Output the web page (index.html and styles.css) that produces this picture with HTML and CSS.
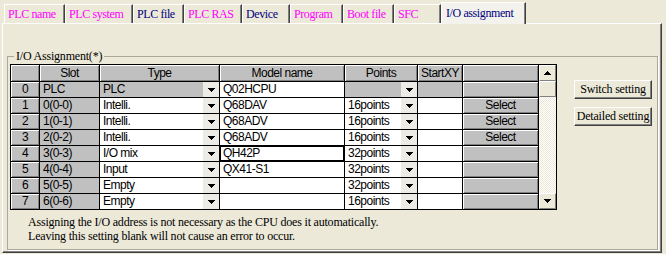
FILE: index.html
```html
<!DOCTYPE html>
<html lang="en">
<head>
    <meta charset="UTF-8">
    <title>PLC parameter - I/O assignment</title>
    <link rel="stylesheet" href="styles.css">
</head>
<body>
    <div class="tabs">
        <div class="tab">PLC name</div>
        <div class="tab">PLC system</div>
        <div class="tab navy">PLC file</div>
        <div class="tab">PLC RAS</div>
        <div class="tab navy">Device</div>
        <div class="tab">Program</div>
        <div class="tab">Boot file</div>
        <div class="tab">SFC</div>
        <div class="tab navy active">I/O assignment</div>
    </div>
    <div class="panel">
        <fieldset class="group">
            <legend>I/O Assignment(*)</legend>
            <div class="io">
                <div class="grid">
                    <div class="scroll">
                        <div class="sb-btn"><i class="arrow up"></i></div>
                        <div class="sb-btn"></div>
                        <div class="sb-btn down"><i class="arrow"></i></div>
                    </div>

                    <!-- header -->
                    <div class="hd"></div>
                    <div class="hd">Slot</div>
                    <div class="hd">Type</div>
                    <div class="hd">Model name</div>
                    <div class="hd">Points</div>
                    <div class="hd">StartXY</div>
                    <div class="hd"></div>

                    <!-- row 0 -->
                    <div class="num">0</div>
                    <div class="c gray">PLC</div>
                    <div class="c combo gray"><span>PLC</span><i class="drop"><i class="arrow"></i></i></div>
                    <div class="c">Q02HCPU</div>
                    <div class="c combo gray"><span></span><i class="drop"><i class="arrow"></i></i></div>
                    <div class="c gray"></div>
                    <div class="sel"></div>

                    <!-- row 1 -->
                    <div class="num">1</div>
                    <div class="c gray">0(0-0)</div>
                    <div class="c combo"><span>Intelli.</span><i class="drop"><i class="arrow"></i></i></div>
                    <div class="c">Q68DAV</div>
                    <div class="c combo"><span>16points</span><i class="drop"><i class="arrow"></i></i></div>
                    <div class="c"></div>
                    <div class="sel">Select</div>

                    <!-- row 2 -->
                    <div class="num">2</div>
                    <div class="c gray">1(0-1)</div>
                    <div class="c combo"><span>Intelli.</span><i class="drop"><i class="arrow"></i></i></div>
                    <div class="c">Q68ADV</div>
                    <div class="c combo"><span>16points</span><i class="drop"><i class="arrow"></i></i></div>
                    <div class="c"></div>
                    <div class="sel">Select</div>

                    <!-- row 3 -->
                    <div class="num">3</div>
                    <div class="c gray">2(0-2)</div>
                    <div class="c combo"><span>Intelli.</span><i class="drop"><i class="arrow"></i></i></div>
                    <div class="c">Q68ADV</div>
                    <div class="c combo"><span>16points</span><i class="drop"><i class="arrow"></i></i></div>
                    <div class="c"></div>
                    <div class="sel">Select</div>

                    <!-- row 4 -->
                    <div class="num">4</div>
                    <div class="c gray">3(0-3)</div>
                    <div class="c combo"><span>I/O mix</span><i class="drop"><i class="arrow"></i></i></div>
                    <div class="c focus">QH42P</div>
                    <div class="c combo"><span>32points</span><i class="drop"><i class="arrow"></i></i></div>
                    <div class="c"></div>
                    <div class="sel"></div>

                    <!-- row 5 -->
                    <div class="num">5</div>
                    <div class="c gray">4(0-4)</div>
                    <div class="c combo"><span>Input</span><i class="drop"><i class="arrow"></i></i></div>
                    <div class="c">QX41-S1</div>
                    <div class="c combo"><span>32points</span><i class="drop"><i class="arrow"></i></i></div>
                    <div class="c"></div>
                    <div class="sel"></div>

                    <!-- row 6 -->
                    <div class="num">6</div>
                    <div class="c gray">5(0-5)</div>
                    <div class="c combo"><span>Empty</span><i class="drop"><i class="arrow"></i></i></div>
                    <div class="c"></div>
                    <div class="c combo"><span>32points</span><i class="drop"><i class="arrow"></i></i></div>
                    <div class="c"></div>
                    <div class="sel"></div>

                    <!-- row 7 -->
                    <div class="num">7</div>
                    <div class="c gray">6(0-6)</div>
                    <div class="c combo"><span>Empty</span><i class="drop"><i class="arrow"></i></i></div>
                    <div class="c"></div>
                    <div class="c combo"><span>16points</span><i class="drop"><i class="arrow"></i></i></div>
                    <div class="c"></div>
                    <div class="sel"></div>
                </div>
                <div class="side">
                    <button class="btn">Switch setting</button>
                    <button class="btn">Detailed setting</button>
                </div>
            </div>
            <p class="notes">
                Assigning the I/O address is not necessary as the CPU does it automatically.<br>
                Leaving this setting blank will not cause an error to occur.
            </p>
        </fieldset>
    </div>
</body>
</html>
```

FILE: styles.css
```css
body {
    margin: 0;
    width: 666px;
    height: 254px;
    overflow: hidden;
    background-color: #ece9d8;
    font-family: "Liberation Serif", "Times New Roman", serif;
    font-size: 12px;
    color: #000;
}

/* tab strip */
.tabs {
    display: flex;
    align-items: flex-end;
    height: 23px;
    padding-left: 4px;
}

.tab {
    box-sizing: border-box;
    flex: none;
    height: 19px;
    padding-left: 3px;
    border-top: 1px solid #fff;
    border-left: 1px solid #fff;
    border-right: 1px solid #404040;
    box-shadow: inset -1px 0 #808080;
    line-height: 18px;
    letter-spacing: -0.4px;
    color: #f0f;
    white-space: nowrap;
}

.tab:nth-child(1) { width: 61px; }
.tab:nth-child(2) { width: 68px; }
.tab:nth-child(3) { width: 51px; }
.tab:nth-child(4) { width: 58px; }
.tab:nth-child(5) { width: 48px; }
.tab:nth-child(6) { width: 53px; }
.tab:nth-child(7) { width: 51px; }
.tab:nth-child(8) { width: 47px; }
.tab:nth-child(9) { width: 85px; }

.tab.navy {
    color: #000080;
}

.tab.active {
    position: relative;
    z-index: 1;
    height: 22px;
    margin-bottom: -1px;
    padding-left: 4px;
    line-height: 20px;
    background-color: #f3f2ec;
}

/* tab page */
.panel {
    box-sizing: border-box;
    width: 660px;
    height: 230px;
    margin-left: 2px;
    padding: 25px 3px 0 4px;
    border: 1px solid;
    border-color: #fff #404040 #404040 #fff;
    box-shadow: inset -1px -1px #808080;
}

.group {
    margin: 0;
    padding: 1px 0 6px 2px;
    border: 1px solid #aca899;
    box-shadow: 1px 1px #fff;
}

.group legend {
    margin-left: 4px;
    padding: 0 2px;
    line-height: 14px;
    letter-spacing: -0.2px;
    background-color: #ece9d8;
}

.io {
    display: flex;
    align-items: flex-start;
}

/* assignment grid */
.grid {
    display: grid;
    grid-template-columns: 28px 59px 119px 124px 72px 44px 75px 17px;
    grid-template-rows: 16px repeat(8, 15px);
    gap: 1px;
    background-color: #000;
    border: 1px solid #000;
    font-family: "Liberation Sans", Arial, sans-serif;
    font-size: 12px;
    letter-spacing: -0.5px;
    line-height: 15px;
}

.c {
    padding-left: 3px;
    background-color: #fff;
    white-space: nowrap;
    overflow: hidden;
}

.c.gray {
    background-color: #c0c0c0;
}

.hd, .num, .sel {
    background-color: #c0c0c0;
    box-shadow: inset 1px 1px #fff, inset -1px -1px #808080;
    text-align: center;
}

.hd {
    line-height: 16px;
}

.combo {
    display: flex;
    justify-content: space-between;
}

.drop {
    flex: none;
    width: 16px;
    display: flex;
    align-items: center;
    justify-content: center;
    padding-top: 1px;
    box-sizing: border-box;
    background-color: #ecebe6;
}

.arrow {
    display: block;
    width: 7px;
    height: 4px;
    background:
        linear-gradient(#000, #000) 0 0 / 7px 1px no-repeat,
        linear-gradient(#000, #000) 1px 1px / 5px 1px no-repeat,
        linear-gradient(#000, #000) 2px 2px / 3px 1px no-repeat,
        linear-gradient(#000, #000) 3px 3px / 1px 1px no-repeat;
}

.arrow.up {
    transform: scaleY(-1);
}

.focus {
    box-shadow: inset 0 0 0 1px #000;
}

.scroll {
    grid-column: 8;
    grid-row: 1 / -1;
    display: flex;
    flex-direction: column;
    background: repeating-conic-gradient(#fff 0 25%, #ece9d8 0 50%) 0 0 / 2px 2px;
}

.sb-btn {
    box-sizing: border-box;
    flex: none;
    height: 16px;
    display: flex;
    align-items: center;
    justify-content: center;
    background-color: #ece9d8;
    border: 1px solid;
    border-color: #fff #808080 #808080 #fff;
}

.sb-btn.down {
    margin-top: auto;
}

/* side buttons */
.side {
    display: flex;
    flex-direction: column;
    gap: 8px;
    margin: 16px 0 0 17px;
}

.btn {
    box-sizing: border-box;
    width: 78px;
    height: 19px;
    padding: 0;
    background-color: #ece9d8;
    border: 1px solid;
    border-color: #fff #404040 #404040 #fff;
    box-shadow: inset -1px -1px #808080;
    font-family: "Liberation Serif", "Times New Roman", serif;
    font-size: 12px;
    letter-spacing: -0.2px;
    line-height: 17px;
    color: #000;
}

.notes {
    margin: 5px 0 0 18px;
    line-height: 14px;
    letter-spacing: -0.2px;
}
```
